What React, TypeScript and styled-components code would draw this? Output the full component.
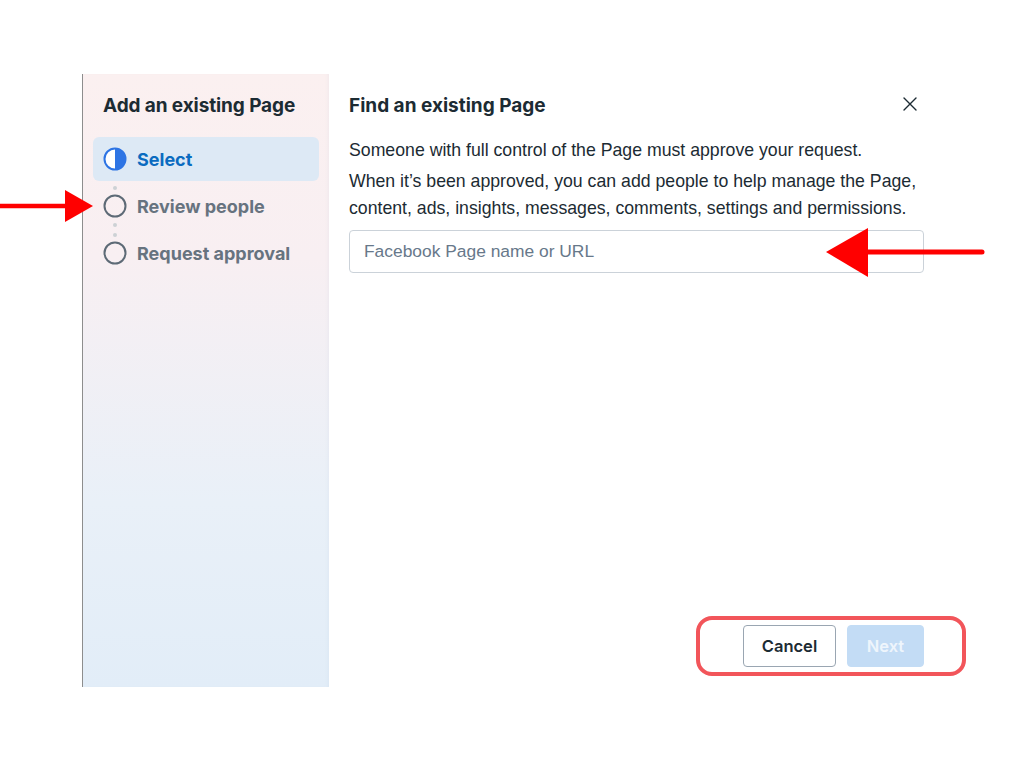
import * as React from "react";
import styled, { createGlobalStyle } from "styled-components";

const GlobalStyle = createGlobalStyle`
  html, body {
    margin: 0;
    padding: 0;
    background: #ffffff;
  }
  body {
    font-family: "Liberation Sans", Arial, sans-serif;
    color: #1c2b33;
  }
`;

const Page = styled.div`
  position: relative;
  width: 1024px;
  height: 768px;
  padding: 74px 0 0 82px;
  box-sizing: border-box;
  overflow: hidden;
`;

const Dialog = styled.div`
  display: flex;
  width: 861px;
  height: 613px;
  background: #ffffff;
`;

const Sidebar = styled.aside`
  width: 247px;
  flex-shrink: 0;
  box-sizing: border-box;
  border-left: 1px solid #8d8d8d;
  padding: 20px 10px 0 10px;
  background: linear-gradient(180deg, #fbf0f0 0%, #f8eff2 30%, #e9f0f8 70%, #e2edf8 100%);
  box-shadow: inset -3px 0 4px -3px rgba(150, 170, 200, 0.15);
`;

const SideTitle = styled.h2`
  margin: 0 0 19px 10px;
  font-family: Inter, "Noto Sans", sans-serif;
  font-size: 19px;
  font-weight: 700;
  line-height: 24px;
  letter-spacing: -0.1px;
  color: #1c2b33;
`;

const StepList = styled.div`
  display: flex;
  flex-direction: column;
`;

const StepRow = styled.div<{ $active?: boolean }>`
  position: relative;
  z-index: ${(p) => (p.$active ? 1 : 0)};
  display: flex;
  align-items: center;
  gap: 10px;
  height: 44px;
  padding: 0 10px;
  border-radius: 6px;
  background: ${(p) => (p.$active ? "#dde9f5" : "transparent")};
  font-family: Inter, "Noto Sans", sans-serif;
  font-size: 18px;
  font-weight: 700;
  color: ${(p) => (p.$active ? "#0a6bc0" : "#67737f")};
`;

const Connector = styled.div`
  display: flex;
  flex-direction: column;
  align-items: center;
  justify-content: center;
  gap: 6px;
  width: 24px;
  height: 3px;
  margin-left: 10px;
`;

const Dot = styled.span`
  flex-shrink: 0;
  width: 4px;
  height: 4px;
  border-radius: 50%;
  background: #cdd1d5;
`;

const Main = styled.section`
  flex: 1;
  display: flex;
  flex-direction: column;
  padding: 20px 19px 20px 20px;
  box-sizing: border-box;
`;

const Header = styled.div`
  display: flex;
  align-items: center;
  justify-content: space-between;
  height: 24px;
  margin-bottom: 19px;
`;

const Title = styled.h1`
  margin: 0;
  font-family: Inter, "Noto Sans", sans-serif;
  font-size: 19px;
  font-weight: 700;
  line-height: 24px;
  color: #1c2b33;
`;

const CloseButton = styled.button`
  display: flex;
  align-items: center;
  justify-content: center;
  width: 24px;
  height: 24px;
  margin: -4px 2px 0 0;
  padding: 0;
  border: none;
  background: none;
  cursor: pointer;
`;

const Text = styled.p`
  margin: 0 0 4px 0;
  font-size: 17.7px;
  line-height: 27px;
  color: #1c2b33;
`;

const Input = styled.input`
  margin-top: 4px;
  width: 100%;
  height: 43px;
  box-sizing: border-box;
  padding: 0 14px;
  border: 1px solid #cbd2d9;
  border-radius: 4px;
  font-family: "Liberation Sans", Arial, sans-serif;
  font-size: 17.4px;
  color: #1c2b33;
  outline: none;
  &::placeholder {
    color: #67788a;
  }
`;

const Footer = styled.div`
  margin-top: auto;
  display: flex;
  justify-content: flex-end;
  gap: 11px;
`;

const Button = styled.button<{ $primary?: boolean }>`
  height: 42px;
  padding: 0 16px;
  border-radius: 4px;
  font-family: Inter, "Noto Sans", sans-serif;
  font-size: 16.5px;
  font-weight: 600;
  cursor: pointer;
  border: 1px solid ${(p) => (p.$primary ? "#c3dcf5" : "#9aa6b2")};
  background: ${(p) => (p.$primary ? "#c3dcf5" : "#ffffff")};
  color: ${(p) => (p.$primary ? "#eef5fc" : "#1c2b33")};
  min-width: ${(p) => (p.$primary ? "77px" : "93px")};
`;

const Overlay = styled.svg`
  position: absolute;
  left: 0;
  top: 0;
  pointer-events: none;
`;

const HalfIcon = () => (
  <svg width="24" height="24" viewBox="0 0 24 24">
    <circle cx="12" cy="12" r="10.5" fill="#ffffff" stroke="#2d74e4" strokeWidth="2" />
    <path d="M12 1.5 A10.5 10.5 0 0 1 12 22.5 Z" fill="#2d74e4" />
  </svg>
);

const RingIcon = () => (
  <svg width="24" height="24" viewBox="0 0 24 24">
    <circle cx="12" cy="12" r="10.5" fill="none" stroke="#5d6a76" strokeWidth="2" />
  </svg>
);

const steps = [
  { label: "Select", active: true },
  { label: "Review people", active: false },
  { label: "Request approval", active: false },
];

export default function App() {
  return (
    <>
      <GlobalStyle />
      <Page>
        <Dialog>
          <Sidebar>
            <SideTitle>Add an existing Page</SideTitle>
            <StepList>
              {steps.map((s, i) => (
                <React.Fragment key={s.label}>
                  {i > 0 && (
                    <Connector>
                      <Dot />
                      <Dot />
                    </Connector>
                  )}
                  <StepRow $active={s.active}>
                    {s.active ? <HalfIcon /> : <RingIcon />}
                    {s.label}
                  </StepRow>
                </React.Fragment>
              ))}
            </StepList>
          </Sidebar>
          <Main>
            <Header>
              <Title>Find an existing Page</Title>
              <CloseButton aria-label="Close">
                <svg width="16" height="16" viewBox="0 0 16 16">
                  <path d="M2 2 L14 14 M14 2 L2 14" stroke="#1c2b33" strokeWidth="1.4" strokeLinecap="round" />
                </svg>
              </CloseButton>
            </Header>
            <Text>Someone with full control of the Page must approve your request.</Text>
            <Text>
              When it’s been approved, you can add people to help manage the Page, content, ads,
              insights, messages, comments, settings and permissions.
            </Text>
            <Input placeholder="Facebook Page name or URL" />
            <Footer>
              <Button>Cancel</Button>
              <Button $primary>Next</Button>
            </Footer>
          </Main>
        </Dialog>
        <Overlay width="1024" height="768" viewBox="0 0 1024 768">
          <rect x="698" y="618" width="266" height="56" rx="14" fill="none" stroke="#f2555a" strokeWidth="4" />
          <line x1="0" y1="206" x2="70" y2="206" stroke="#ff0000" strokeWidth="4.5" />
          <polygon points="93,206 65,190 65,222" fill="#ff0000" />
          <line x1="860" y1="252" x2="982" y2="252" stroke="#ff0000" strokeWidth="5" strokeLinecap="round" />
          <polygon points="826,252 868,228 868,277" fill="#ff0000" />
        </Overlay>
      </Page>
    </>
  );
}
